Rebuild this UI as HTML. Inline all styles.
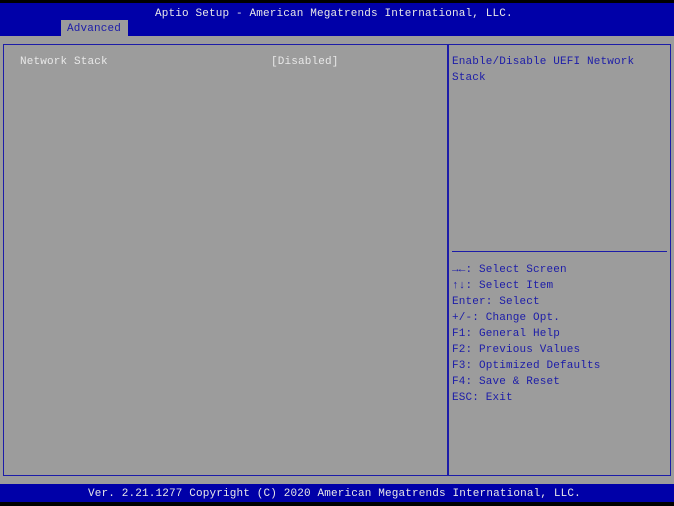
<!DOCTYPE html>
<html><head><style>
html,body{margin:0;padding:0;width:674px;height:506px;overflow:hidden;background:#000;}
body{position:relative;font-family:"Liberation Mono",monospace;font-size:11px;letter-spacing:0.15px;}
.t{position:absolute;white-space:pre;line-height:16px;}
#hdr{position:absolute;left:0;top:3px;width:674px;height:33px;background:#0000a8;}
#tab{position:absolute;left:61px;top:20px;width:67px;height:16px;background:#9c9c9c;}
#main{position:absolute;left:0;top:36px;width:674px;height:448px;background:#9c9c9c;}
#box{position:absolute;left:3px;top:44px;width:666px;height:430px;border:1px solid #1c1ca8;}
#vd{position:absolute;left:447px;top:44px;width:2px;height:432px;background:#1c1ca8;}
#hd{position:absolute;left:452px;top:251px;width:215px;height:1px;background:#1c1ca8;}
#ftr{position:absolute;left:0;top:484px;width:674px;height:18px;background:#0000a8;}
.w{color:#e8e8e8;}
.b{color:#1c1ca8;}
</style></head><body>
<div id="hdr"></div>
<div class="t w" style="left:155px;top:6px;">Aptio Setup - American Megatrends International, LLC.</div>
<div id="main"></div>
<div id="tab"></div>
<div class="t b" style="left:67px;top:21px;">Advanced</div>
<div id="box"></div>
<div id="vd"></div>
<div id="hd"></div>
<div class="t w" style="left:20px;top:54px;">Network Stack</div>
<div class="t w" style="left:271px;top:54px;">[Disabled]</div>
<div class="t b" style="left:452px;top:54px;">Enable/Disable UEFI Network
Stack</div>
<div class="t b" style="left:452px;top:262px;"><b>→←</b>: Select Screen
<b>↑↓</b>: Select Item
Enter: Select
+/-: Change Opt.
F1: General Help
F2: Previous Values
F3: Optimized Defaults
F4: Save &amp; Reset
ESC: Exit</div>
<div id="ftr"></div>
<div class="t w" style="left:88px;top:486px;">Ver. 2.21.1277 Copyright (C) 2020 American Megatrends International, LLC.</div>
</body></html>
